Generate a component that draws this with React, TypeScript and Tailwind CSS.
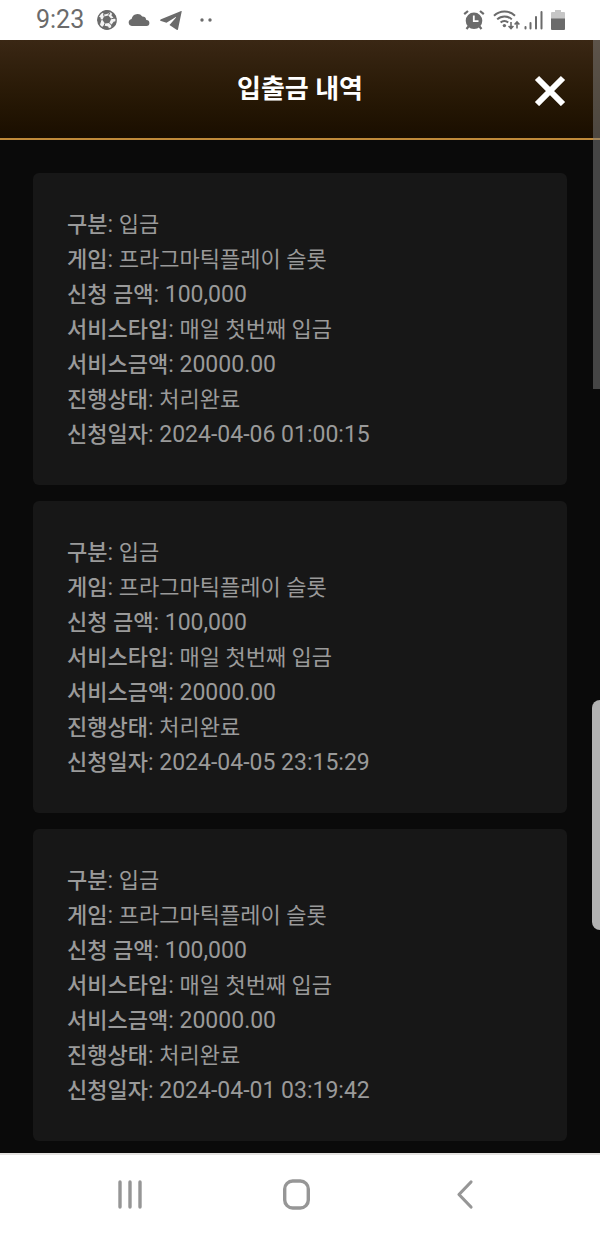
type Entry = {
  kind: string;
  game: string;
  amount: string;
  service: string;
  bonus: string;
  status: string;
  date: string;
};

const base = {
  kind: "입금",
  game: "프라그마틱플레이 슬롯",
  amount: "100,000",
  service: "매일 첫번째 입금",
  bonus: "20000.00",
  status: "처리완료",
};

const entries: Entry[] = [
  { ...base, date: "2024-04-06 01:00:15" },
  { ...base, date: "2024-04-05 23:15:29" },
  { ...base, date: "2024-04-01 03:19:42" },
];

const fields: { key: keyof Entry; label: string; numeric?: boolean }[] = [
  { key: "kind", label: "구분" },
  { key: "game", label: "게임" },
  { key: "amount", label: "신청 금액", numeric: true },
  { key: "service", label: "서비스타입" },
  { key: "bonus", label: "서비스금액", numeric: true },
  { key: "status", label: "진행상태" },
  { key: "date", label: "신청일자", numeric: true },
];

function StatusBar() {
  return (
    <div className="flex h-10 items-center justify-between bg-white pl-9 pr-[35px] text-[#6b6b6b]">
      <div className="flex items-center">
        <span className="text-[25px] leading-10">9:23</span>

        {/* Football */}
        <svg className="ml-[13px] h-5 w-5" viewBox="0 0 20 20">
          <circle cx="10" cy="10" r="9.2" fill="#f4f4f4" stroke="currentColor" strokeWidth="1.4" />
          <g fill="currentColor">
            <path d="M7 6.4l4.4-1 2.8 3.4-1.8 4.2-4.6.4-2.4-3.6z" />
            <path d="M4.6 2L9 0l4.600.8-1.400 2.400-4.600 1.200z" />
            <path d="M15 2.400l3 2.600 1.600 4-2.400-.2-2.600-3.400z" />
            <path d="M19.600 11.400l-1.400 4-3.600 2.800-.6-3 2.800-3.600z" />
            <path d="M12.400 19.400l-4.600.2-3.400-2 2.400-2 4.400.8z" />
            <path d="M2.800 15L.4 10.600 1 6.200l2.600 1.400.4 4z" />
          </g>
          <path
            d="M7 6.400L6.600 3.800M11.400 5.400l1.600-2.600M14.200 8.800l2.800-.6M12.400 13l2 2M7.800 13.400l-.8 2.800M5.400 9.800l-2 .2"
            fill="none"
            stroke="currentColor"
            strokeWidth="1"
          />
        </svg>

        {/* Cloud */}
        <svg className="ml-[11px] h-3 w-[22px]" viewBox="0 0 22 12">
          <path
            fill="currentColor"
            d="M3.800 12A3.600 3.600 0 0 1 3.600 4.900 6 6 0 0 1 14.300 2.600 4 4 0 0 1 18.300 6 3 3 0 0 1 18.500 12z"
          />
        </svg>

        {/* Paper plane */}
        <svg className="ml-[10px] h-[19px] w-[22px]" viewBox="0 0 22 19">
          <path
            fill="currentColor"
            d="M21.700.5L18 18.300c-.2.8-.8.9-1.400.5L9.500 14l6.500-7.600c.2-.4-.2-.5-.6-.2L6.500 11.800 1 10C-.2 9.600-.2 8.800 1 8.300L20.600.2c.7-.3 1.200-.1 1.100.3z"
          />
        </svg>

        <svg className="ml-[18px] h-1 w-3.5" viewBox="0 0 14 4">
          <circle cx="2" cy="2" r="1.700" fill="currentColor" />
          <circle cx="10" cy="2" r="1.700" fill="currentColor" />
        </svg>
      </div>

      <div className="flex items-center">
        {/* Alarm */}
        <svg className="h-5 w-[22px]" viewBox="0 0 22 20">
          <circle cx="11" cy="10.800" r="8.300" fill="currentColor" />
          <path
            d="M1.200 4.200L5 1M20.800 4.200L17 1M5.500 16.500l-2 2.500M16.500 16.500l2 2.500"
            stroke="currentColor"
            strokeWidth="2.200"
          />
          <path d="M10.800 5.600v5.600h4.700" fill="none" stroke="white" strokeWidth="1.800" />
        </svg>

        {/* Wifi with traffic arrows */}
        <svg className="ml-2 h-5 w-[27px]" viewBox="0 0 27 20" fill="none" stroke="currentColor">
          <path d="M1 5.800a15 15 0 0 1 21 0M4.200 9.400a10.500 10.500 0 0 1 14.600 0M7.600 12.600a5.600 5.600 0 0 1 7.600 0" strokeWidth="2" />
          <circle cx="11.400" cy="15.600" r="1.700" fill="currentColor" stroke="none" />
          <path d="M18 12v6.500M15.600 16l2.400 2.600 2.400-2.600M24 18.500v-6.500M21.600 14.500l2.400-2.600 2.400 2.600" strokeWidth="1.600" />
        </svg>

        {/* Signal */}
        <svg
          className="ml-[4px] h-5 w-[19px]"
          viewBox="0 0 19 20"
          stroke="currentColor"
          strokeWidth="2"
          strokeLinecap="round"
        >
          <path d="M1.500 17v1.500M6.500 13v5.500M12 7v11.500M17.500 2v16.500" />
        </svg>

        {/* Battery */}
        <svg className="ml-2 h-5 w-3.5" viewBox="0 0 14 20">
          <path d="M4 0h6v2h3a1 1 0 0 1 1 1v6H0V3a1 1 0 0 1 1-1h3z" fill="#c6c6c6" />
          <path d="M0 8.500h14V19a1 1 0 0 1-1 1H1a1 1 0 0 1-1-1z" fill="currentColor" />
        </svg>
      </div>
    </div>
  );
}

function Header() {
  return (
    <header className="grid h-[100px] grid-cols-[1fr_auto_1fr] items-center border-b-2 border-[#c08a3a] bg-gradient-to-b from-[#3a2714] to-[#1a0e00] px-[33px]">
      <h1 className="col-start-2 text-[26px] font-bold leading-9 text-white">입출금 내역</h1>
      <button type="button" aria-label="닫기" className="justify-self-end">
        <svg className="h-[34px] w-[34px]" viewBox="0 0 34 34" stroke="white" strokeWidth="6">
          <path d="M4 6l26 26M30 6L4 32" />
        </svg>
      </button>
    </header>
  );
}

function EntryCard({ entry }: { entry: Entry }) {
  return (
    <li className="rounded-md bg-[#171717] px-[34px] pb-[33px] pt-[34px]">
      {fields.map(({ key, label, numeric }) => (
        <p key={key} className="text-[23px] leading-[35px]">
          <strong className="text-[22px] font-medium leading-none">{label}</strong>:{" "}
          <span className={numeric ? "leading-none" : "text-[22px] leading-none"}>{entry[key]}</span>
        </p>
      ))}
    </li>
  );
}

function NavBar() {
  return (
    <nav className="flex h-20 items-center justify-around border-t-2 border-[#e4e2e0] bg-white pl-[46px] pr-[51px] text-[#969696]">
      <button type="button" aria-label="최근 앱">
        <svg className="h-8 w-8" viewBox="0 0 32 32" stroke="currentColor" strokeWidth="3.400" strokeLinecap="round">
          <path d="M6 4v25M16 4v25M26 4v25" />
        </svg>
      </button>
      <button type="button" aria-label="홈">
        <svg className="h-8 w-8" viewBox="0 0 32 32" fill="none" stroke="currentColor" strokeWidth="3.400">
          <rect x="3.700" y="3" width="23.600" height="27" rx="8" />
        </svg>
      </button>
      <button type="button" aria-label="뒤로">
        <svg
          className="h-8 w-8"
          viewBox="0 0 32 32"
          fill="none"
          stroke="currentColor"
          strokeWidth="3.200"
          strokeLinecap="round"
          strokeLinejoin="round"
        >
          <path d="M22 4L10 16.500 22 29" />
        </svg>
      </button>
    </nav>
  );
}

export default function App() {
  return (
    <div className="relative flex min-h-screen flex-col bg-[#0a0a0a] font-[Roboto,'Noto_Sans_CJK_KR',sans-serif]">
      <StatusBar />
      <Header />
      <main className="flex-1 px-[33px] pb-3 pt-[33px] text-[#9a9a9a]">
        <ul className="flex flex-col gap-4">
          {entries.map((entry) => (
            <EntryCard key={entry.date} entry={entry} />
          ))}
        </ul>
      </main>
      <NavBar />

      {/* Scroll thumb and edge panel handle float over the page */}
      <div className="absolute right-0 top-10 h-[349px] w-[7px] bg-[#808080]/50" />
      <div className="absolute right-0 top-[700px] h-[230px] w-2 rounded-l-lg bg-[#b2b2b2]" />
    </div>
  );
}
